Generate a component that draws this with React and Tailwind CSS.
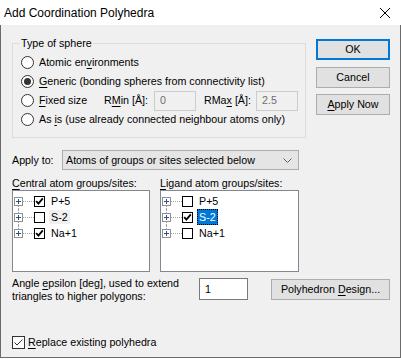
import React from 'react';

function U({ children }) {
  return <span className="underline decoration-1 underline-offset-[2px]">{children}</span>;
}

function Radio({ checked, children }) {
  return (
    <div className="flex items-center h-[19px]">
      <span className="w-[13px] h-[13px] rounded-full border border-[#333333] bg-white flex items-center justify-center shrink-0">
        {checked && <span className="w-[7px] h-[7px] rounded-full bg-[#333333]" />}
      </span>
      <span className="ml-[5px] whitespace-nowrap">{children}</span>
    </div>
  );
}

function Plus() {
  return (
    <svg width="9" height="9" viewBox="0 0 9 9" className="block shrink-0">
      <rect x="0.5" y="0.5" width="8" height="8" fill="white" stroke="#919191" />
      <path d="M2 4.5H7M4.5 2V7" stroke="#2f4f94" strokeWidth="1" />
    </svg>
  );
}

function TreeCheck({ checked }) {
  return (
    <svg width="11" height="11" viewBox="0 0 11 11" className="block shrink-0">
      <rect x="0.5" y="0.5" width="10" height="10" fill="white" stroke="#000" />
      {checked && <path d="M2.2 5.2 L4.4 7.6 L8.8 2.4" fill="none" stroke="#000" strokeWidth="1.8" />}
    </svg>
  );
}

function TreeRow({ first, last, checked, label, mode }) {
  return (
    <div className="flex items-center h-[16px]">
      <div className="flex flex-col items-center w-[9px] h-full shrink-0">
        <div className={first ? 'flex-1 w-0' : 'flex-1 w-0 border-l border-dotted border-[#a0a0a0]'} />
        <Plus />
        <div className={last ? 'flex-1 w-0' : 'flex-1 w-0 border-l border-dotted border-[#a0a0a0]'} />
      </div>
      <div className="w-[11px] h-0 border-t border-dotted border-[#a0a0a0] shrink-0" />
      <TreeCheck checked={checked} />
      {mode === 'active' ? (
        <span className="ml-[4px] h-[16px] px-[2px] flex items-center bg-[#0078d7] text-white outline-1 outline-dotted outline-black -outline-offset-1">
          {label}
        </span>
      ) : mode === 'inactive' ? (
        <span className="ml-[4px] h-[14px] px-[2px] flex items-center bg-[#f0f0f0]">{label}</span>
      ) : (
        <span className="ml-[4px] px-[2px]">{label}</span>
      )}
    </div>
  );
}

function Btn({ children, def, className = '' }) {
  return (
    <div
      className={
        (def ? 'border-2 border-[#0078d7] ' : 'border border-[#adadad] ') +
        'bg-[#e1e1e1] flex items-center justify-center whitespace-nowrap ' +
        className
      }
    >
      <span>{children}</span>
    </div>
  );
}

export default function App() {
  return (
    <div className="w-[401px] h-[359px] flex flex-col font-['Liberation_Sans',Arial,sans-serif] text-[10.7px] text-black bg-white overflow-hidden">
      {/* title bar */}
      <div className="h-[25px] shrink-0 flex items-center justify-between bg-white pl-[4px] pr-[11px]">
        <span className="text-[12px]">Add Coordination Polyhedra</span>
        <svg width="10" height="10" viewBox="0 0 10 10" className="block">
          <path d="M0 0L10 10M10 0L0 10" stroke="#000" strokeWidth="1" />
        </svg>
      </div>

      {/* body */}
      <div className="h-[333px] shrink-0 bg-[#f0f0f0] border-x border-b border-[#6b6b6b] pl-[11px] pt-[10px] flex flex-col">
        {/* top section */}
        <div className="flex items-start">
          <fieldset className="w-[294px] h-[103px] border border-[#dcdcdc] pl-[7px] pr-0 pb-0 m-0">
            <legend className="px-[1px] leading-[16px]">Type of sphere</legend>
            <div className="pl-[1px] pt-[2px] flex flex-col">
              <Radio>
                Atomic en<U>v</U>ironments
              </Radio>
              <Radio checked>
                <U>G</U>eneric (bonding spheres from connectivity list)
              </Radio>
              <div className="flex items-center h-[19px]">
                <div className="w-[83px] shrink-0">
                  <Radio>
                    <U>F</U>ixed size
                  </Radio>
                </div>
                <span className="w-[50px] shrink-0 whitespace-nowrap">
                  R<U>M</U>in [Å]:
                </span>
                <div className="w-[42px] h-[20px] border border-[#cccccc] bg-[#f0f0f0] text-[#6d6d6d] pl-[5px] flex items-center shrink-0">
                  0
                </div>
                <span className="ml-[8px] w-[52px] shrink-0 whitespace-nowrap">
                  RMa<U>x</U> [Å]:
                </span>
                <div className="w-[42px] h-[20px] border border-[#cccccc] bg-[#f0f0f0] text-[#6d6d6d] pl-[5px] flex items-center shrink-0">
                  2.5
                </div>
              </div>
              <Radio>
                As <U>i</U>s (use already connected neighbour atoms only)
              </Radio>
            </div>
          </fieldset>

          <div className="ml-[10px] mt-[4px] flex flex-col w-[74px]">
            <Btn def className="h-[21px]">OK</Btn>
            <Btn className="h-[21px] mt-[7px]">Cancel</Btn>
            <Btn className="h-[21px] mt-[6px]">
              <U>A</U>pply Now
            </Btn>
          </div>
        </div>

        {/* apply to */}
        <div className="flex items-center mt-[12px]">
          <span className="w-[50px] shrink-0 whitespace-nowrap">Apply to:</span>
          <div className="w-[237px] h-[20px] border border-[#adadad] bg-[#e5e5e5] flex items-center justify-between pl-[3px] pr-[6px] whitespace-nowrap">
            <span>Atoms of groups or sites selected below</span>
            <svg width="9" height="5" viewBox="0 0 9 5" className="block">
              <path d="M0.5 0.5L4.5 4.5L8.5 0.5" fill="none" stroke="#606060" strokeWidth="1" />
            </svg>
          </div>
        </div>

        {/* list labels */}
        <div className="flex mt-[6px] h-[14px] items-center whitespace-nowrap">
          <span className="w-[148px] shrink-0">
            <U>C</U>entral atom groups/sites:
          </span>
          <span>
            <U>L</U>igand atom groups/sites:
          </span>
        </div>

        {/* lists */}
        <div className="flex">
          <div className="w-[138px] h-[82px] border border-[#828790] bg-white pl-[1px] pt-[2px] flex flex-col shrink-0">
            <TreeRow first checked label="P+5" />
            <TreeRow label="S-2" mode="inactive" />
            <TreeRow last checked label="Na+1" />
          </div>
          <div className="ml-[10px] w-[139px] h-[82px] border border-[#828790] bg-white pl-[1px] pt-[2px] flex flex-col shrink-0">
            <TreeRow first label="P+5" />
            <TreeRow checked label="S-2" mode="active" />
            <TreeRow last label="Na+1" />
          </div>
        </div>

        {/* angle row */}
        <div className="flex items-start mt-[5px]">
          <div className="w-[187px] shrink-0 leading-[13px] whitespace-nowrap">
            Angle <U>e</U>psilon [deg], used to extend
            <br />
            triangles to higher polygons:
          </div>
          <div className="mt-[1px] w-[49px] h-[22px] border border-[#7a7a7a] bg-white pl-[5px] flex items-center shrink-0">
            1
          </div>
          <Btn className="ml-[23px] mt-[2px] w-[119px] h-[21px]">
            Polyhedron <U>D</U>esign...
          </Btn>
        </div>

        {/* replace checkbox */}
        <div className="flex items-center h-[16px] mt-[31px]">
          <svg width="13" height="13" viewBox="0 0 13 13" className="block shrink-0">
            <rect x="0.5" y="0.5" width="12" height="12" fill="white" stroke="#333333" />
            <path d="M2.5 6.5 L5 9 L10.5 3.5" fill="none" stroke="#333333" strokeWidth="1" />
          </svg>
          <span className="ml-[3px] whitespace-nowrap">
            <U>R</U>eplace existing polyhedra
          </span>
        </div>
      </div>
      <div className="flex-1 bg-white" />
    </div>
  );
}
